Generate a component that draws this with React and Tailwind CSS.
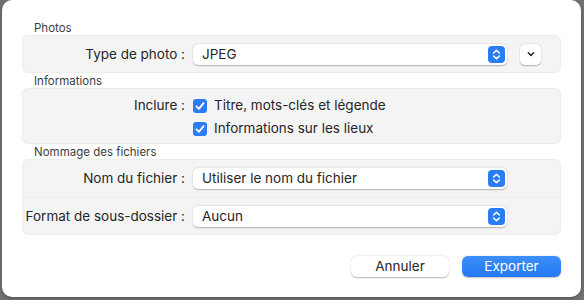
import React from 'react';

function Stepper() {
    return (
        <div className="w-[17px] h-[17px] rounded-[4px] bg-[#2a7df5] flex items-center justify-center">
            <svg width="17" height="17" viewBox="0 0 17 17" fill="none">
                <path d="M5.6 7 L8.5 4.4 L11.4 7" stroke="white" strokeWidth="1.5" strokeLinecap="round" strokeLinejoin="round" />
                <path d="M5.6 10 L8.5 12.6 L11.4 10" stroke="white" strokeWidth="1.5" strokeLinecap="round" strokeLinejoin="round" />
            </svg>
        </div>
    );
}

function Select({ value }) {
    return (
        <div className="w-[314px] h-[21px] bg-white rounded-[5px] shadow-[0_0.5px_1.5px_rgba(0,0,0,0.28)] flex items-center justify-between pl-[9px] pr-[2px]">
            <span className="text-[13.5px] text-[#262626]">{value}</span>
            <Stepper />
        </div>
    );
}

function Checkbox() {
    return (
        <div className="w-[14px] h-[14px] rounded-[3px] bg-[#2a7df5] flex items-center justify-center">
            <svg width="14" height="14" viewBox="0 0 14 14" fill="none">
                <path d="M3.4 7.3 L5.9 9.8 L10.6 4.2" stroke="white" strokeWidth="1.8" strokeLinecap="round" strokeLinejoin="round" />
            </svg>
        </div>
    );
}

function Heading({ children }) {
    return (
        <div className="h-[15px] pl-[12px] pt-[2px] text-[11.5px] leading-[13px] text-[#3d3d3d]">{children}</div>
    );
}

function Label({ children }) {
    return <div className="w-[162px] shrink-0 text-right text-[13.5px] text-[#262626] whitespace-nowrap">{children}</div>;
}

export default function App() {
    return (
        <div className="w-[584px] h-[300px] bg-[#707070] pl-[2px] pr-[3px]" style={{ fontFamily: 'Inter, "Noto Sans", sans-serif' }}>
            <div className="h-[297px] bg-white rounded-[10px] px-[20px] pt-[20px] shadow-[0_1px_3px_rgba(0,0,0,0.3)]">
                <Heading>Photos</Heading>
                {/* Type de photo */}
                <div className="h-[38px] bg-[#f4f4f4] border border-[#ececec] rounded-[6px] flex items-center">
                    <Label>Type de photo :</Label>
                    <div className="ml-[8px]">
                        <Select value="JPEG" />
                    </div>
                    <div className="ml-[13px] w-[21px] h-[21px] bg-white rounded-[5px] shadow-[0_0.5px_1.5px_rgba(0,0,0,0.28)] flex items-center justify-center">
                        <svg width="10" height="10" viewBox="0 0 10 10" fill="none">
                            <path d="M2.3 3.8 L5 6.4 L7.7 3.8" stroke="#2b2b2b" strokeWidth="1.5" strokeLinecap="round" strokeLinejoin="round" />
                        </svg>
                    </div>
                </div>

                <Heading>Informations</Heading>
                <div className="h-[56px] bg-[#f4f4f4] border border-[#ececec] rounded-[6px] pt-[5px]">
                    <div className="h-[23px] flex items-center">
                        <Label>Inclure :</Label>
                        <div className="ml-[8px] flex items-center gap-[7px]">
                            <Checkbox />
                            <span className="text-[13.5px] text-[#262626]">Titre, mots-clés et légende</span>
                        </div>
                    </div>
                    <div className="h-[23px] flex items-center">
                        <div className="w-[162px] shrink-0" />
                        <div className="ml-[8px] flex items-center gap-[7px]">
                            <Checkbox />
                            <span className="text-[13.5px] text-[#262626]">Informations sur les lieux</span>
                        </div>
                    </div>
                </div>

                <Heading>Nommage des fichiers</Heading>
                <div className="h-[76px] bg-[#f4f4f4] border border-[#ececec] rounded-[6px] flex flex-col">
                    <div className="h-[38px] flex items-center border-b border-[#efefef]">
                        <Label>Nom du fichier :</Label>
                        <div className="ml-[8px]">
                            <Select value="Utiliser le nom du fichier" />
                        </div>
                    </div>
                    <div className="flex-1 flex items-center">
                        <Label>Format de sous-dossier :</Label>
                        <div className="ml-[8px]">
                            <Select value="Aucun" />
                        </div>
                    </div>
                </div>

                {/* Boutons */}
                <div className="mt-[21px] flex justify-end gap-[13px]">
                    <button className="w-[98px] h-[21px] bg-white rounded-[6px] shadow-[0_0.5px_1.5px_rgba(0,0,0,0.3)] text-[13.5px] text-[#262626] leading-[21px]">
                        Annuler
                    </button>
                    <button className="w-[99px] h-[21px] rounded-[6px] bg-gradient-to-b from-[#3d8ef8] to-[#2479f4] shadow-[0_0.5px_1.5px_rgba(0,0,0,0.25)] text-[13.5px] text-white leading-[21px]">
                        Exporter
                    </button>
                </div>
            </div>
        </div>
    );
}
